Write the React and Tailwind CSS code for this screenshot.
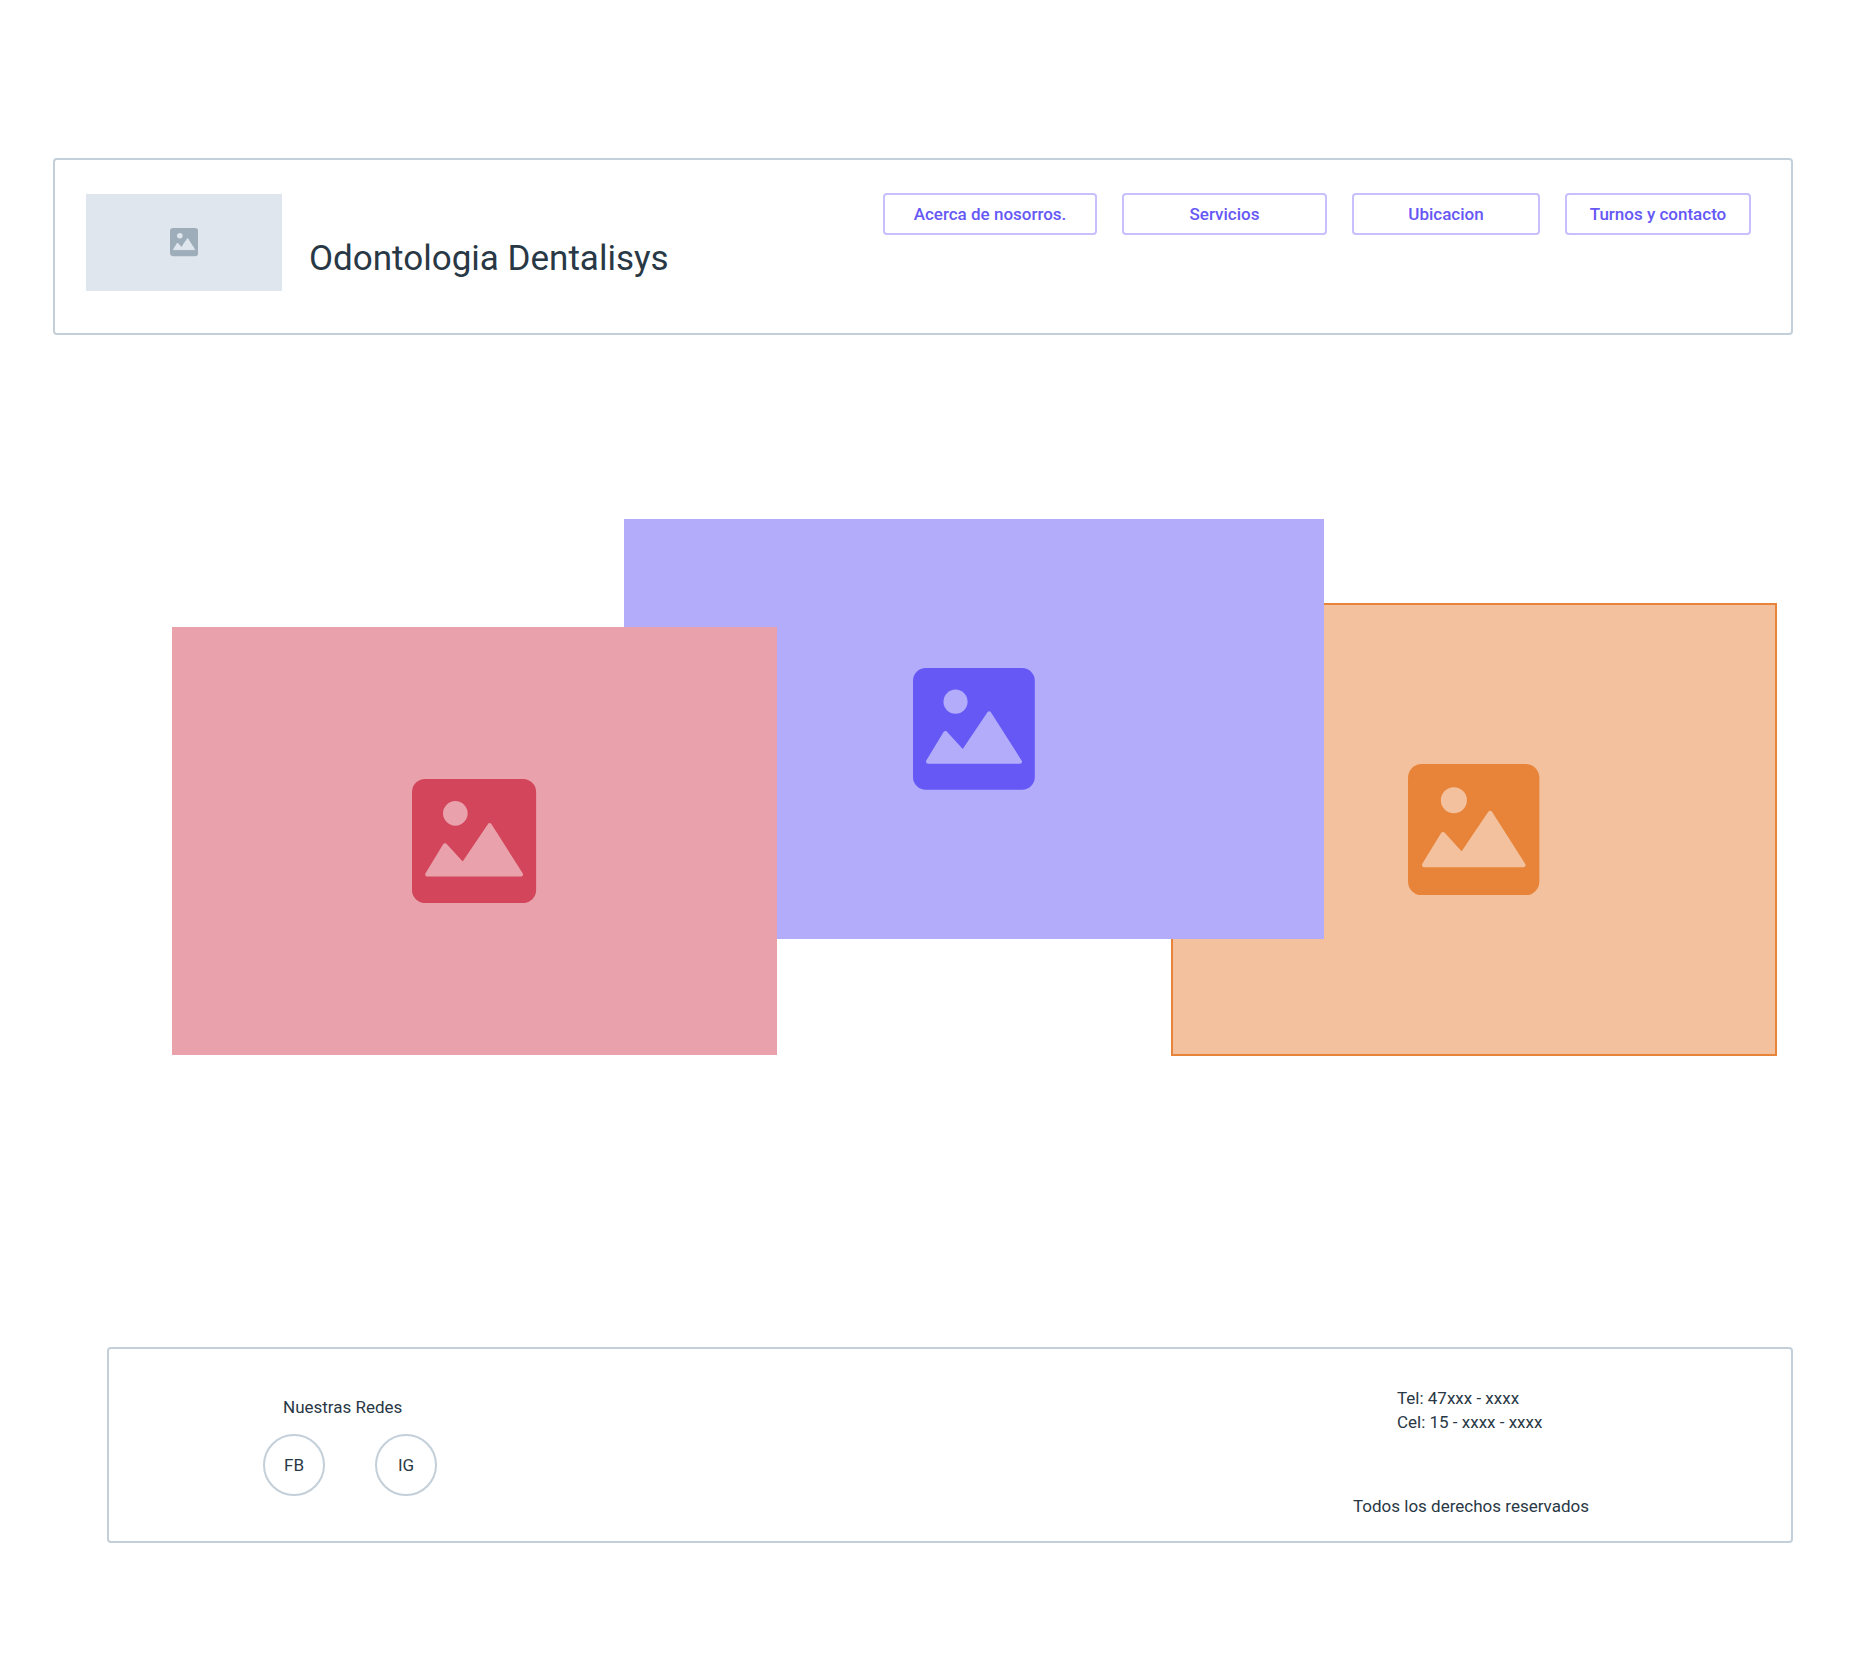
const navItems = [
  { label: "Acerca de nosorros.", width: "w-[214px]" },
  { label: "Servicios", width: "w-[205px]" },
  { label: "Ubicacion", width: "w-[188px]" },
  { label: "Turnos y contacto", width: "w-[186px]" },
];

function PictureIcon({ className }) {
  return (
    <svg viewBox="0 0 124 124" className={className} aria-hidden="true">
      <rect width="124" height="124" rx="13" fill="currentColor" />
      <g className="fill-(--paper) stroke-(--paper)">
        <circle cx="43.3" cy="34.3" r="12.3" stroke="none" />
        <path
          d="M15.4 95.3 L33 66.4 L50.9 86 L77.6 46.4 L108.7 95.3 Z"
          strokeWidth="4.4"
          strokeLinejoin="round"
        />
      </g>
    </svg>
  );
}

function Picture({ label, className, iconClass }) {
  return (
    <div role="img" aria-label={label} className={`flex items-center justify-center bg-(--paper) ${className}`}>
      <PictureIcon className={`h-[29%] ${iconClass}`} />
    </div>
  );
}

function SocialLink({ children }) {
  return (
    <a
      href="#"
      className="flex size-[62px] items-center justify-center rounded-full border-2 border-[#c3cfd9]"
    >
      {children}
    </a>
  );
}

export default function App() {
  return (
    <div className="bg-white pt-[158px] pr-[71px] pb-[115px] pl-[53px] font-['Roboto',sans-serif] text-[17px] leading-6 text-[#293845]">
      <header className="flex items-start justify-between rounded border-2 border-[#c3cfd9] pt-[33px] pr-10 pb-[42px] pl-[31px]">
        <div className="flex items-start gap-[27px]">
          <Picture
            label="Logo"
            className="mt-px h-[97px] w-[196px] [--paper:#dfe6ed]"
            iconClass="text-[#9eadba]"
          />
          <h1 className="pt-[46px] text-[35px] leading-10 whitespace-nowrap">Odontologia Dentalisys</h1>
        </div>
        <nav className="flex gap-[25px]">
          {navItems.map((item) => (
            <button
              key={item.label}
              type="button"
              className={`h-[42px] rounded border-2 border-[#c7c0fd] font-medium whitespace-nowrap text-[#6558f5] ${item.width}`}
            >
              {item.label}
            </button>
          ))}
        </nav>
      </header>

      <main className="mt-[184px] mr-4 ml-[119px] grid grid-cols-[452fr_153fr_394fr_153fr_453fr] items-start">
        <Picture
          label="Imagen 3"
          className="col-span-2 col-start-4 row-start-1 mt-[84px] h-[453px] inset-ring-2 inset-ring-[#e88439] [--paper:#f3c19d]"
          iconClass="text-[#e88439]"
        />
        <Picture
          label="Imagen 2"
          className="col-span-3 col-start-2 row-start-1 h-[420px] [--paper:#b2acfa]"
          iconClass="text-[#6558f5]"
        />
        <Picture
          label="Imagen 1"
          className="col-span-2 col-start-1 row-start-1 mt-[108px] h-[428px] [--paper:#e9a1ac]"
          iconClass="text-[#d3455b]"
        />
      </main>

      <footer className="mt-[291px] ml-[54px] flex items-start justify-between rounded border-2 border-[#c3cfd9] pt-[37px] pr-[198px] pb-[23px] pl-[154px]">
        <section className="flex flex-col gap-[15px] pt-[9px]">
          <h2 className="pl-5">Nuestras Redes</h2>
          <div className="flex gap-[50px]">
            <SocialLink>FB</SocialLink>
            <SocialLink>IG</SocialLink>
          </div>
        </section>
        <section className="flex w-60 flex-col gap-[60px]">
          <address className="pl-11 not-italic">
            <p>Tel: 47xxx - xxxx</p>
            <p>Cel: 15 - xxxx - xxxx</p>
          </address>
          <p>Todos los derechos reservados</p>
        </section>
      </footer>
    </div>
  );
}
